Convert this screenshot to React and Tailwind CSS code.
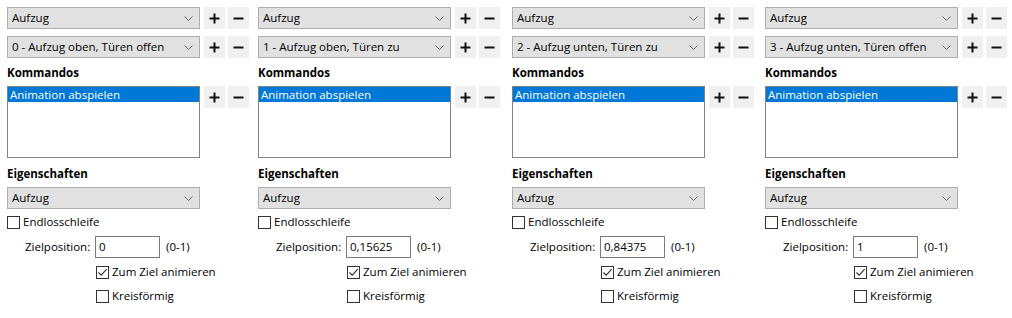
import React from "react";

const panels = [
  { state: "0 - Aufzug oben, Türen offen", pos: "0", width: "w-[251px]", shift: "" },
  { state: "1 - Aufzug oben, Türen zu", pos: "0,15625", width: "w-[254px]", shift: "mt-[2px]" },
  { state: "2 - Aufzug unten, Türen zu", pos: "0,84375", width: "w-[253px]", shift: "" },
  { state: "3 - Aufzug unten, Türen offen", pos: "1", width: "w-[253px]", shift: "mt-[1px]" },
];

function Chevron() {
  return (
    <svg width="9" height="5" viewBox="0 0 9 5" className="flex-none">
      <path d="M0.5 0.5 L4.5 4.5 L8.5 0.5" fill="none" stroke="#6a6a6a" strokeWidth="1" />
    </svg>
  );
}

function Select({ value }) {
  return (
    <div className="flex h-[22px] w-[193px] flex-none items-center justify-between border border-[#adadad] bg-[#e1e1e1] pl-[4px] pr-[6px]">
      <span className="truncate">{value}</span>
      <Chevron />
    </div>
  );
}

function IconButton({ kind }) {
  return (
    <div className="flex h-[22px] w-[21px] flex-none items-center justify-center bg-[#f0f0f0]">
      <svg width="11" height="11" viewBox="0 0 11 11">
        <rect x="0.5" y="4.5" width="10" height="2" fill="#111" />
        {kind === "plus" && <rect x="4.5" y="0.5" width="2" height="10" fill="#111" />}
      </svg>
    </div>
  );
}

function PlusMinus() {
  return (
    <div className="ml-[4px] flex gap-[3px]">
      <IconButton kind="plus" />
      <IconButton kind="minus" />
    </div>
  );
}

function Checkbox({ checked, label }) {
  return (
    <div className="flex h-[16px] items-center">
      <div className="flex h-[13px] w-[13px] flex-none items-center justify-center border border-[#333] bg-white">
        {checked && (
          <svg width="11" height="11" viewBox="0 0 11 11">
            <path d="M1.5 5.5 L4.2 8.2 L9.7 2.2" fill="none" stroke="#333" strokeWidth="1.2" />
          </svg>
        )}
      </div>
      <span className="ml-[3px]">{label}</span>
    </div>
  );
}

function Panel({ state, pos, width, shift }) {
  return (
    <div className={`${width} flex-none`}>
      <div className="flex">
        <Select value="Aufzug" />
        <PlusMinus />
      </div>
      <div className="mt-[7px] flex">
        <Select value={state} />
        <PlusMinus />
      </div>

      <div className={shift}>
        <div className="mt-[7px] h-[16px] font-bold leading-[16px]">Kommandos</div>
        <div className="mt-[5px] flex">
          <div className="h-[72px] w-[193px] flex-none border border-[#828282] bg-white">
            <div className="h-[15px] bg-[#0078d7] pl-[2px] leading-[15px] text-white">
              Animation abspielen
            </div>
          </div>
          <PlusMinus />
        </div>

        <div className="mt-[8px] h-[16px] font-bold leading-[16px]">Eigenschaften</div>
        <div className="mt-[5px]">
          <Select value="Aufzug" />
        </div>

        <div className="mt-[5px]">
          <Checkbox checked={false} label="Endlosschleife" />
        </div>

        <div className="mt-[6px] flex h-[22px] items-center">
          <span className="ml-[18px] w-[70px] flex-none">Zielposition:</span>
          <div className="flex h-[22px] w-[65px] flex-none items-center border border-[#7a7a7a] bg-white pl-[3px]">
            {pos}
          </div>
          <span className="ml-[6px]">(0-1)</span>
        </div>

        <div className="ml-[89px] mt-[6px]">
          <Checkbox checked={true} label="Zum Ziel animieren" />
        </div>
        <div className="ml-[89px] mt-[8px]">
          <Checkbox checked={false} label="Kreisförmig" />
        </div>
      </div>
    </div>
  );
}

export default function App() {
  return (
    <div className="h-[318px] w-[1012px] overflow-hidden bg-white pl-[7px] pt-[7px] font-['Open_Sans',sans-serif] text-[11.5px] leading-[16px] text-black">
      <div className="flex">
        {panels.map((p) => (
          <Panel key={p.state} {...p} />
        ))}
      </div>
    </div>
  );
}
